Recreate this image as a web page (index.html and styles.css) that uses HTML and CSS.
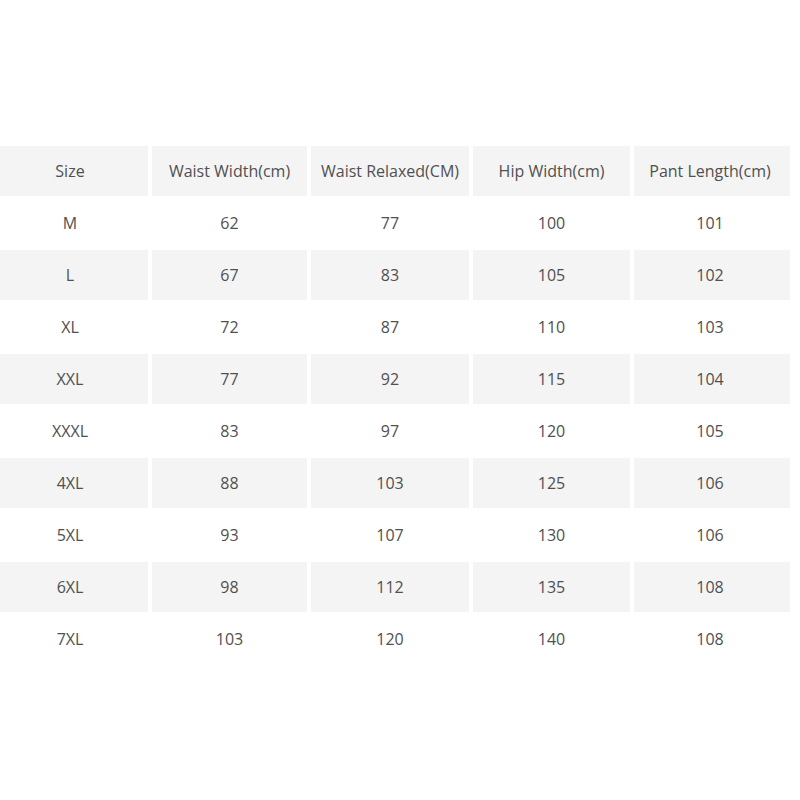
FILE: index.html
```html
<!DOCTYPE html>
<html>
<head>
<meta charset="utf-8">
<link rel="stylesheet" href="styles.css">
</head>
<body>
<div class="table">
  <div class="row head"><div>Size</div><div>Waist Width(cm)</div><div>Waist Relaxed(CM)</div><div>Hip Width(cm)</div><div>Pant Length(cm)</div></div>
  <div class="row"><div>M</div><div>62</div><div>77</div><div>100</div><div>101</div></div>
  <div class="row alt"><div>L</div><div>67</div><div>83</div><div>105</div><div>102</div></div>
  <div class="row"><div>XL</div><div>72</div><div>87</div><div>110</div><div>103</div></div>
  <div class="row alt"><div>XXL</div><div>77</div><div>92</div><div>115</div><div>104</div></div>
  <div class="row"><div>XXXL</div><div>83</div><div>97</div><div>120</div><div>105</div></div>
  <div class="row alt"><div>4XL</div><div>88</div><div>103</div><div>125</div><div>106</div></div>
  <div class="row"><div>5XL</div><div>93</div><div>107</div><div>130</div><div>106</div></div>
  <div class="row alt"><div>6XL</div><div>98</div><div>112</div><div>135</div><div>108</div></div>
  <div class="row"><div>7XL</div><div>103</div><div>120</div><div>140</div><div>108</div></div>
</div>
</body>
</html>
```
FILE: styles.css
```css
html, body {
  margin: 0;
  padding: 0;
  background: #ffffff;
}
body {
  font-family: "Open Sans", "DejaVu Sans", sans-serif;
  font-size: 16px;
  color: #505050;
}
.table {
  padding-top: 146px;
  display: flex;
  flex-direction: column;
  row-gap: 2px;
  width: 790px;
}
.row {
  display: grid;
  grid-template-columns: 148px 155px 158px 157px 156px;
  column-gap: 4px;
  height: 50px;
}
.row > div {
  display: flex;
  align-items: center;
  justify-content: center;
}
.row > div:first-child {
  padding-right: 8px;
}
.row > div:last-child {
  padding-right: 4px;
}
.head > div, .alt > div {
  background: #f4f4f4;
}
```
